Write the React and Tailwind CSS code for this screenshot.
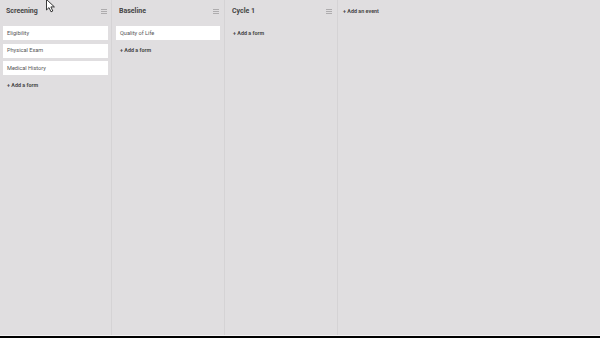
import React from "react";

const columns = [
  { name: "Screening", forms: ["Eligibility", "Physical Exam", "Medical History"], w: "w-[112px]", pad: "px-[3px]" },
  { name: "Baseline", forms: ["Quality of Life"], w: "w-[113px]", pad: "px-[4px]" },
  { name: "Cycle 1", forms: [], w: "w-[113px]", pad: "px-[4px]" },
];

function MenuIcon() {
  return (
    <svg width="6" height="5" viewBox="0 0 6 5" className="text-[#aeacae]">
      <rect x="0" y="0" width="6" height="1" fill="currentColor" />
      <rect x="0" y="2" width="6" height="1" fill="currentColor" />
      <rect x="0" y="4" width="6" height="1" fill="currentColor" />
    </svg>
  );
}

function Cursor() {
  return (
    <svg width="12" height="14" viewBox="0 0 12 14" className="absolute left-[46px] top-[-1px]">
      <path d="M0.5 0.5 L0.5 11 L3 8.6 L5 12.8 L6.8 12 L4.9 7.9 L8.4 7.9 Z" fill="white" stroke="#222" strokeWidth="0.9" strokeLinejoin="round" />
    </svg>
  );
}

export default function App() {
  return (
    <div className="relative w-[600px] h-[338px] flex flex-col bg-[#e0dee0] font-['Roboto','Liberation_Sans',sans-serif] overflow-hidden">
      <div className="flex flex-1">
        {columns.map((col) => (
          <div key={col.name} className={`${col.w} ${col.pad} shrink-0 border-r border-[#d5d3d5] flex flex-col`}>
            <div className="h-[22px] flex items-center justify-between pl-[3px] pr-[1px] pt-[1px]">
              <span className="text-[7px] font-bold text-[#454545]">{col.name}</span>
              <MenuIcon />
            </div>
            <div className="mt-[4px] flex flex-col gap-[3.5px]">
              {col.forms.map((f) => (
                <div key={f} className="h-[14px] bg-white flex items-center pl-[4px] text-[5.6px] text-[#555]">
                  {f}
                </div>
              ))}
              <div className="h-[14px] flex items-center pl-[4px] text-[5.4px] font-bold text-[#4a4a4a]">
                + Add a form
              </div>
            </div>
          </div>
        ))}
        <div className="flex-1 pl-[5px]">
          <div className="h-[22px] flex items-center pt-[1px] text-[5.4px] font-bold text-[#4a4a4a]">
            + Add an event
          </div>
        </div>
      </div>
      <div className="h-px bg-[#f2f1f2]" />
      <div className="h-[2px] bg-black" />
      <Cursor />
    </div>
  );
}
